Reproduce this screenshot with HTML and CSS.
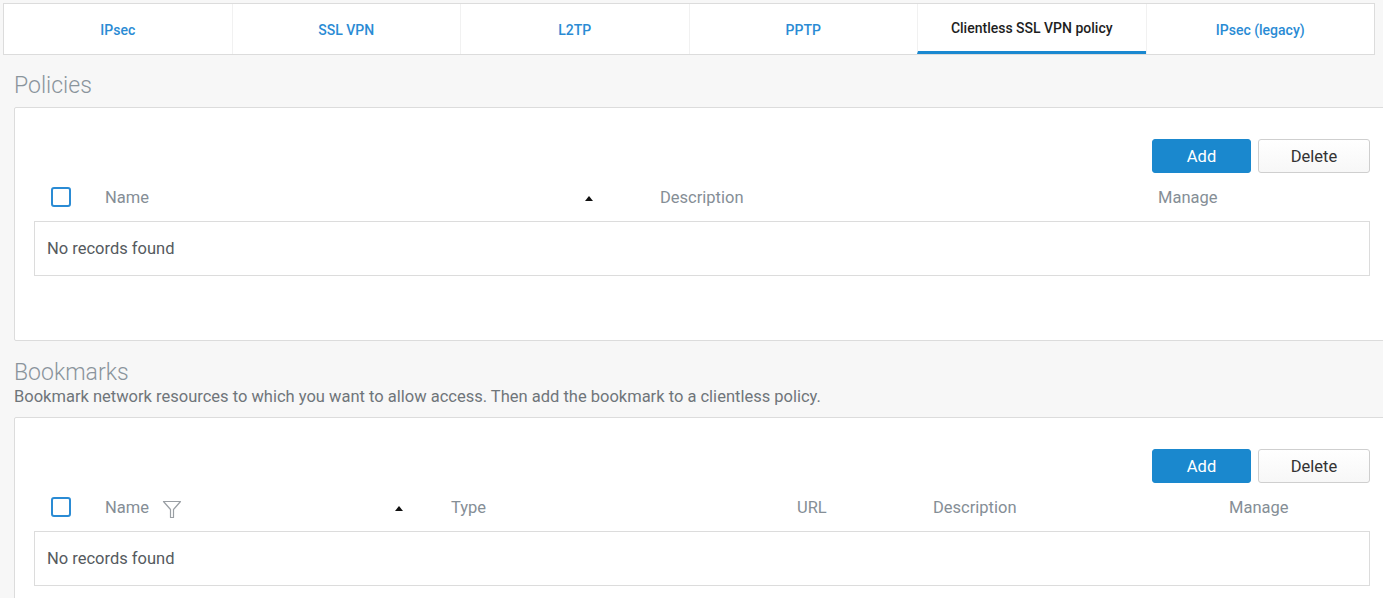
FILE: index.html
```html
<!DOCTYPE html>
<html>
<head>
<meta charset="utf-8">
<link rel="stylesheet" href="styles.css">
</head>
<body>
<div class="page">
  <nav class="tabs">
    <a class="tab">IPsec</a>
    <a class="tab">SSL VPN</a>
    <a class="tab">L2TP</a>
    <a class="tab">PPTP</a>
    <a class="tab active">Clientless SSL VPN policy</a>
    <a class="tab">IPsec (legacy)</a>
  </nav>

  <section class="section first">
    <h2 class="title">Policies</h2>
    <div class="panel">
      <div class="actions">
        <button class="btn primary">Add</button>
        <button class="btn">Delete</button>
      </div>
      <div class="thead cols-policies">
        <div class="cell check"><span class="checkbox"></span></div>
        <div class="cell">Name</div>
        <div class="cell sort"><span class="tri"></span></div>
        <div class="cell">Description</div>
        <div class="cell">Manage</div>
      </div>
      <div class="tbody">No records found</div>
    </div>
  </section>

  <section class="section second">
    <h2 class="title">Bookmarks</h2>
    <p class="subtitle">Bookmark network resources to which you want to allow access. Then add the bookmark to a clientless policy.</p>
    <div class="panel">
      <div class="actions">
        <button class="btn primary">Add</button>
        <button class="btn">Delete</button>
      </div>
      <div class="thead cols-bookmarks">
        <div class="cell check"><span class="checkbox"></span></div>
        <div class="cell">Name
          <svg class="filter" width="20" height="20" viewBox="0 0 20 20"><path d="M1.5 2.5 H18.5 L11.5 10.5 V18.5 H8.5 V10.5 Z" fill="none" stroke="#9a9fa4" stroke-width="1.2" stroke-linejoin="round"/></svg>
        </div>
        <div class="cell sort"><span class="tri"></span></div>
        <div class="cell">Type</div>
        <div class="cell">URL</div>
        <div class="cell">Description</div>
        <div class="cell">Manage</div>
      </div>
      <div class="tbody">No records found</div>
    </div>
  </section>
</div>
</body>
</html>
```

FILE: styles.css
```css
html, body {
  margin: 0;
  padding: 0;
}
body {
  background: #f7f7f7;
  font-family: Roboto, "Liberation Sans", sans-serif;
  overflow: hidden;
  width: 1383px;
  height: 598px;
}
.page {
  padding: 3px 0 0 0;
}
.tabs {
  display: flex;
  margin: 0 8px 0 3px;
  height: 50px;
  background: #fff;
  border: 1px solid #dcdcdc;
}
.tab {
  flex: 1;
  display: flex;
  align-items: center;
  justify-content: center;
  font-size: 14px;
  font-weight: 500;
  color: #2a8bd4;
  border-left: 1px solid #f1f1f1;
  box-sizing: border-box;
  padding-top: 1px;
}
.tab:first-child {
  border-left: none;
}
.tab.active {
  color: #1e1e1e;
  border-bottom: 3px solid #1a88d0;
  padding-top: 0;
}
.section {
  padding-left: 14px;
}
.title {
  margin: 0;
  font-size: 23px;
  font-weight: 300;
  color: #8a949c;
  line-height: 28px;
}
.first .title {
  padding-top: 17px;
  height: 35px;
}
.second .title {
  padding-top: 18px;
  height: 28px;
}
.subtitle {
  margin: 0 0 10px 0;
  font-size: 16.5px;
  color: #6f757a;
  line-height: 20px;
}
.panel {
  width: 1336px;
  background: #fff;
  border: 1px solid #dcdcdc;
  border-radius: 2px;
  padding: 31px 20px 64px 19px;
}
.actions {
  display: flex;
  justify-content: flex-end;
  gap: 7px;
}
.btn {
  height: 34px;
  font-family: Roboto, "Liberation Sans", sans-serif;
  font-size: 16.5px;
  border-radius: 3px;
  border: 1px solid #cfcfcf;
  background: linear-gradient(#ffffff, #f7f7f7);
  color: #333;
  width: 112px;
  cursor: pointer;
}
.btn.primary {
  width: 99px;
  background: #1a88ce;
  border-color: #1a88ce;
  color: #fff;
}
.thead {
  display: grid;
  height: 48px;
  align-items: center;
  font-size: 16.5px;
  color: #858e96;
}
.cols-policies {
  grid-template-columns: 71px 480px 75px 498px 1fr;
}
.cols-bookmarks {
  grid-template-columns: 71px 290px 56px 346px 136px 296px 1fr;
}
.cell {
  display: flex;
  align-items: center;
}
.check {
  padding-left: 17px;
}
.checkbox {
  width: 16px;
  height: 16px;
  border: 2px solid #2a8bd4;
  border-radius: 3px;
}
.tri {
  width: 0;
  height: 0;
  border-left: 4px solid transparent;
  border-right: 4px solid transparent;
  border-bottom: 5px solid #111;
  margin-top: 2px;
}
.filter {
  margin-left: 13px;
  margin-top: 4px;
}
.tbody {
  border: 1px solid #dcdcdc;
  height: 53px;
  display: flex;
  align-items: center;
  padding-left: 12px;
  font-size: 16.5px;
  color: #555a5e;
}
```
